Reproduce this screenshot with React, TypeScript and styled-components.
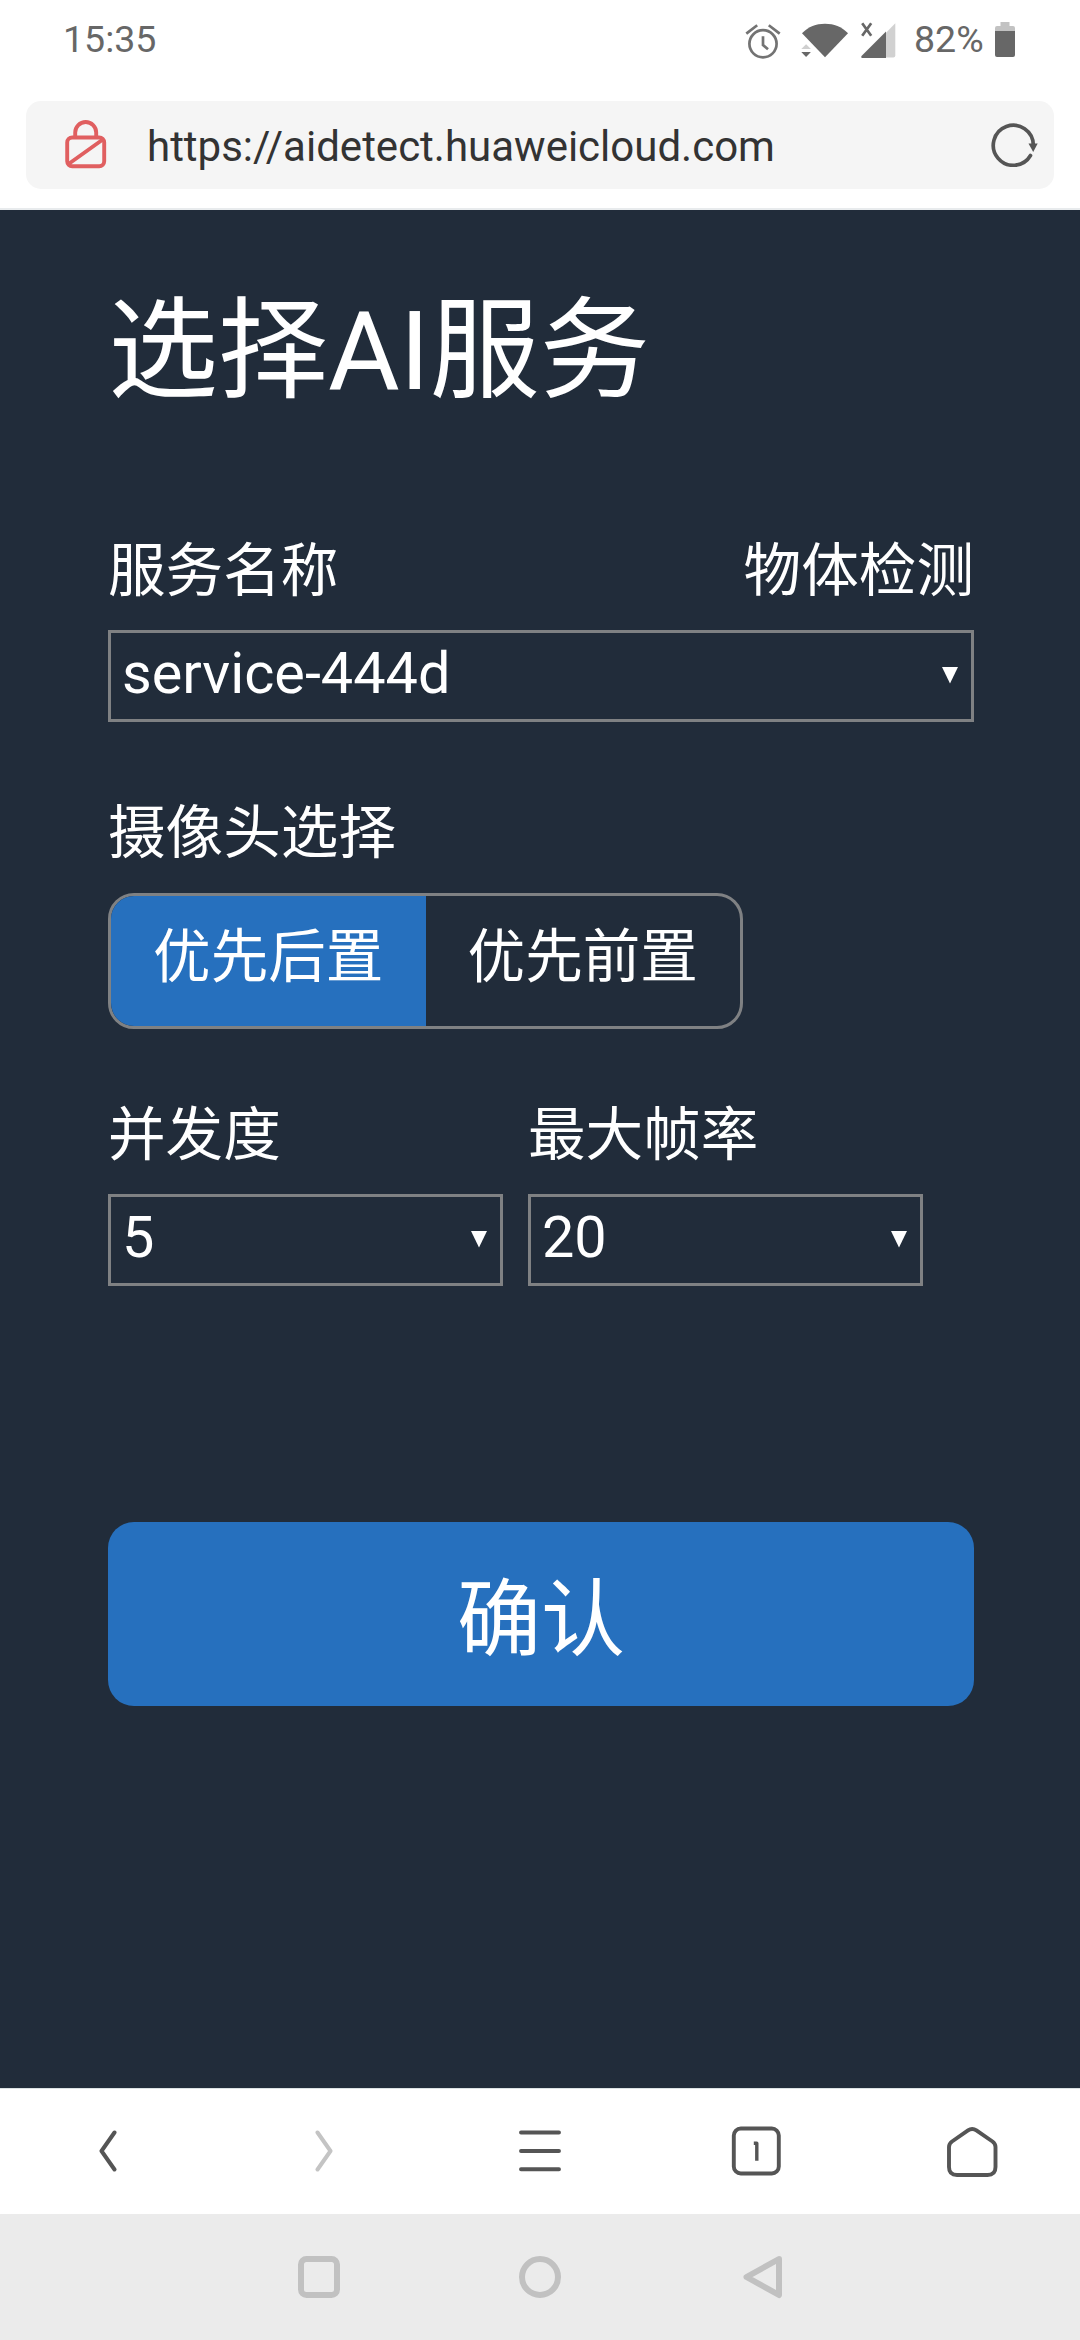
import React from "react";
import styled, { createGlobalStyle } from "styled-components";

const GlobalStyle = createGlobalStyle`
  * { box-sizing: border-box; }
  body {
    margin: 0;
    background: #212c3a;
    font-family: Roboto, "Noto Sans CJK SC", sans-serif;
    font-weight: 400;
  }
  button { font-family: inherit; }
`;

const Phone = styled.div`
  width: 1080px;
  height: 2340px;
  display: flex;
  flex-direction: column;
  overflow: hidden;
`;

const StatusBar = styled.header`
  height: 80px;
  padding: 0 65px 0 63px;
  display: flex;
  justify-content: space-between;
  background: #fff;
  color: #676767;
`;

const StatusText = styled.span`
  font-size: 37.5px;
  line-height: 44px;
  padding-top: 17px;
`;

const StatusIcons = styled.div`
  display: flex;
  align-items: flex-start;
`;

const Icon = styled.svg<{ $left?: number; $top?: number }>`
  display: block;
  flex: none;
  margin-left: ${(p) => p.$left ?? 0}px;
  margin-top: ${(p) => p.$top ?? 0}px;
`;

const BatteryLevel = styled(StatusText)`
  width: 70px;
  margin-left: 18px;
  white-space: nowrap;
`;

const BrowserBar = styled.div`
  height: 130px;
  padding: 21px 26px 0;
  background: #fff;
  border-bottom: 2px solid #e8ebed;
`;

const AddressField = styled.div`
  height: 88px;
  padding: 0 16px 0 38px;
  border-radius: 15px;
  background: #f5f5f5;
  display: flex;
  align-items: center;
`;

const Address = styled.span`
  flex: 1;
  margin: 3px 0 0 39px;
  color: #333;
  font-size: 42px;
  line-height: 50px;
`;

const Page = styled.main`
  height: 1878px;
  padding: 0 106px 0 108px;
  background: #212c3a;
  color: #fff;
  display: flex;
  flex-direction: column;
`;

const Title = styled.h1`
  margin: 67px 0 0;
  height: 150px;
  font-size: 110px;
  line-height: 150px;
  font-weight: 400;
`;

const Field = styled.section<{ $top: number; $width?: number }>`
  margin-top: ${(p) => p.$top}px;
  width: ${(p) => (p.$width ? `${p.$width}px` : "auto")};
`;

const LabelRow = styled.div<{ $height?: number }>`
  height: ${(p) => p.$height ?? 91}px;
  display: flex;
  justify-content: space-between;
`;

const Label = styled.span`
  font-size: 57.6px;
  line-height: 66px;
`;

const SelectBox = styled.div`
  height: 92px;
  padding: 0 13px 0 11px;
  border: 3px solid #7f8183;
  display: flex;
  align-items: center;
  justify-content: space-between;
  font-size: 57.6px;
  line-height: 68px;
`;

const Value = styled.span`
  margin-top: -4px;
`;

const Segmented = styled.div`
  width: 635px;
  height: 136px;
  border: 3px solid #7f8183;
  border-radius: 26px;
  overflow: hidden;
  display: flex;
`;

const Segment = styled.button<{ $active?: boolean }>`
  flex: 1;
  border: 0;
  padding: 0 0 19px;
  color: #fff;
  background: ${(p) => (p.$active ? "#2670be" : "transparent")};
  font-size: 57.6px;
`;

const Pair = styled.div`
  display: flex;
  gap: 25px;
`;

const Confirm = styled.button`
  margin-top: 236px;
  height: 184px;
  width: 866px;
  padding: 0 0 4px;
  border: 0;
  border-radius: 26px;
  background: #2670be;
  color: #fff;
  font-size: 84px;
`;

const Toolbar = styled.nav`
  height: 126px;
  padding-bottom: 2px;
  border-top: 1px solid #dbe2e4;
  background: #fff;
  display: grid;
  grid-template-columns: repeat(5, 216px);
  align-items: center;
  justify-items: center;
`;

const SystemNav = styled.footer`
  flex: 1;
  background: #ebebeb;
  display: flex;
  justify-content: center;
  align-items: center;
  gap: 179px;
`;

const AlarmIcon = () => (
  <Icon width="36" height="36" viewBox="0 0 36 36" $top={23} fill="none" stroke="#737373" strokeWidth="2.7">
    <circle cx="18" cy="20.8" r="13.6" />
    <path d="M18 13.3V22l5 4.2" />
    <path d="M1.3 10.6 12.2 2.2M34.7 10.6 23.8 2.2" />
  </Icon>
);

const WifiIcon = () => (
  <Icon width="48" height="36" viewBox="0 0 48 36" $left={20} $top={22}>
    <path d="M1 11.2C7.5 4.8 15 1.8 24 1.8s16.500 3 23 9.400L24 35.300Z" fill="#676767" />
    <path d="M.3 27 5.100 22.200 9.900 27Z" fill="#cfcfcf" />
    <path d="M.3 30H9.900L5.100 35Z" fill="#676767" />
  </Icon>
);

const SignalIcon = () => (
  <Icon width="36" height="36" viewBox="0 0 36 36" $left={11} $top={22}>
    <path d="M35.300 1.200V33.500a2 2 0 0 1-2 2H2Z" fill="#d1d1d1" />
    <path d="M26 9.500V36H2q-1.500-.5-.5-2Z" fill="#676767" />
    <path d="M2.200 1.200 11.200 13.800M11.200 1.200 2.200 13.800" stroke="#676767" strokeWidth="2.700" />
  </Icon>
);

const BatteryIcon = () => (
  <Icon width="20" height="36" viewBox="0 0 20 36" $left={11} $top={22}>
    <path d="M0 9V6q0-2 2-2h3.500V0h9v4H18q2 0 2 2v3Z" fill="#c2c2c2" />
    <path d="M0 9h20v24q0 2-2 2H2q-2 0-2-2Z" fill="#676767" />
  </Icon>
);

const InsecureLockIcon = () => (
  <Icon width="44" height="50" viewBox="0 0 44 50" fill="none" stroke="#e05f60" strokeWidth="3.900">
    <rect x="3.200" y="17.500" width="37" height="28.800" rx="5" />
    <path d="M11.200 17.500v-5a10.500 10.500 0 0 1 21 0v5M4.500 44 39.500 19" />
  </Icon>
);

const ReloadIcon = () => (
  <Icon width="48" height="44" viewBox="0 0 48 44" fill="none" stroke="#555" strokeWidth="3.700">
    <path d="M40.500 32.500A20 20 0 1 1 43.300 22" strokeLinecap="round" />
    <path d="M38.500 20.500h9.200L43.200 29Z" fill="#555" stroke="none" />
  </Icon>
);

const Caret = () => (
  <Icon width="16" height="19" viewBox="0 0 16 19">
    <path d="M0 0h16L8 16.500Z" fill="#fff" />
  </Icon>
);

const Select = ({ value }: { value: string }) => (
  <SelectBox>
    <Value>{value}</Value>
    <Caret />
  </SelectBox>
);

const Chevron = ({ forward }: { forward?: boolean }) => (
  <Icon
    width="18" height="42" viewBox="0 0 18 42" fill="none"
    stroke={forward ? "#c4c4c4" : "#555"} strokeWidth="4" strokeLinecap="round" strokeLinejoin="round"
  >
    <path d={forward ? "M2.500 2.500 15.500 21 2.500 39.500" : "M15.500 2.500 2.500 21l13 18.500"} />
  </Icon>
);

export default function App() {
  return (
    <Phone>
      <GlobalStyle />
      <StatusBar>
        <StatusText>15:35</StatusText>
        <StatusIcons>
          <AlarmIcon />
          <WifiIcon />
          <SignalIcon />
          <BatteryLevel>82%</BatteryLevel>
          <BatteryIcon />
        </StatusIcons>
      </StatusBar>
      <BrowserBar>
        <AddressField>
          <InsecureLockIcon />
          <Address>https://aidetect.huaweicloud.com</Address>
          <ReloadIcon />
        </AddressField>
      </BrowserBar>

      <Page lang="zh-CN">
        <Title>选择AI服务</Title>
        <Field $top={112}>
          <LabelRow>
            <Label>服务名称</Label>
            <Label>物体检测</Label>
          </LabelRow>
          <Select value="service-444d" />
        </Field>
        <Field $top={79}>
          <LabelRow $height={92}>
            <Label>摄像头选择</Label>
          </LabelRow>
          <Segmented>
            <Segment $active>优先后置</Segment>
            <Segment>优先前置</Segment>
          </Segmented>
        </Field>
        <Pair>
          <Field $top={74} $width={395}>
            <LabelRow>
              <Label>并发度</Label>
            </LabelRow>
            <Select value="5" />
          </Field>
          <Field $top={74} $width={395}>
            <LabelRow>
              <Label>最大帧率</Label>
            </LabelRow>
            <Select value="20" />
          </Field>
        </Pair>
        <Confirm>确认</Confirm>
      </Page>

      <Toolbar>
        <Chevron />
        <Chevron forward />
        <Icon width="42" height="42" viewBox="0 0 42 42" stroke="#555" strokeWidth="3.900" strokeLinecap="round">
          <path d="M2 2.500h38M2 21h38M2 39.300h38" />
        </Icon>
        <Icon width="50" height="50" viewBox="0 0 50 50" fill="none" stroke="#555" strokeWidth="3.900">
          <rect x="2.800" y="2.500" width="45" height="45" rx="7" />
          <path d="M22.800 17.200h3v17.500" strokeWidth="3.400" strokeLinejoin="round" />
        </Icon>
        <Icon width="52" height="52" viewBox="0 0 52 52" $top={3} fill="none" stroke="#555" strokeWidth="3.900" strokeLinejoin="round">
          <path d="M22 4.400q4.200-3 8.400 0L46.500 15.500q3 2.300 3 5.500V41q0 8-8 8H11q-8 0-8-8V21q0-3.200 3-5.500Z" />
        </Icon>
      </Toolbar>
      <SystemNav>
        <Icon width="42" height="42" viewBox="0 0 42 42" fill="none" stroke="#c1c1c1" strokeWidth="6">
          <rect x="3" y="3" width="36" height="36" rx="5.500" />
        </Icon>
        <Icon width="42" height="42" viewBox="0 0 42 42" fill="none" stroke="#c1c1c1" strokeWidth="6">
          <circle cx="21" cy="21" r="18" />
        </Icon>
        <Icon width="42" height="44" viewBox="0 0 42 44" fill="none" stroke="#c1c1c1" strokeWidth="6" strokeLinejoin="round">
          <path d="M39 4 6.500 22 39 40Z" />
        </Icon>
      </SystemNav>
    </Phone>
  );
}
